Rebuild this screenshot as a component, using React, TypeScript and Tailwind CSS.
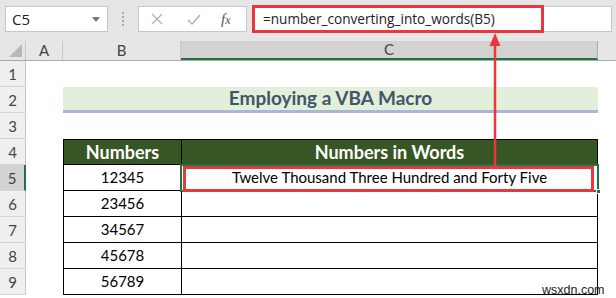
import React from "react";

const rowH = "h-[26px]";

function RowHead({ n, active }: { n: number; active?: boolean }) {
  return (
    <div
      className={`w-[26px] ${rowH} shrink-0 flex items-end justify-center pb-[1px] text-[15px] text-[#444] border-b border-[#d4d4d4] ${
        active ? "bg-[#d2d2d2] border-r-2 border-r-[#217346]" : "bg-[#efefef] border-r border-r-[#c8c8c8]"
      }`}
    >
      {n}
    </div>
  );
}

function EmptyRow({ n }: { n: number }) {
  return (
    <div className="flex">
      <RowHead n={n} />
      <div className="flex-1 bg-white" />
    </div>
  );
}

function DataRow({ n, num, words, active }: { n: number; num: string; words?: string; active?: boolean }) {
  return (
    <div className="flex">
      <RowHead n={n} active={active} />
      <div className="w-[37px] shrink-0" />
      <div className={`w-[118px] shrink-0 ${rowH} border-l border-b border-black flex items-center justify-center text-[15px] text-black`}>
        {num}
      </div>
      <div className={`w-[417px] shrink-0 ${rowH} border-l border-r border-b border-black flex items-center justify-center text-[15px] text-black`}>
        {words}
      </div>
    </div>
  );
}

export default function App() {
  return (
    <div
      className="relative w-[616px] h-[298px] overflow-hidden bg-white"
      style={{ fontFamily: "Lato, 'Open Sans', sans-serif" }}
    >
      {/* toolbar */}
      <div className="h-[41px] bg-[#e6e6e6] flex items-start pt-[6px] pl-[5px]" style={{ fontFamily: "'Open Sans', sans-serif" }}>
        <div className="w-[103px] h-[26px] bg-white border border-[#c6c6c6] flex items-center justify-between pl-[6px] pr-[7px] text-[15px] text-[#222]">
          <span>C5</span>
          <svg width="8" height="5" viewBox="0 0 8 5"><path d="M0 0h8L4 5z" fill="#777" /></svg>
        </div>
        <div className="w-[30px] h-[26px] flex flex-col items-center justify-center gap-[2px]">
          <span className="w-[2px] h-[2px] bg-[#a8a8a8]" />
          <span className="w-[2px] h-[2px] bg-[#a8a8a8]" />
          <span className="w-[2px] h-[2px] bg-[#a8a8a8]" />
          <span className="w-[2px] h-[2px] bg-[#a8a8a8]" />
        </div>
        <div className="w-[109px] h-[26px] bg-white border border-[#c6c6c6] flex items-center pl-[12px]">
          <svg width="12" height="12" viewBox="0 0 12 12"><path d="M1 1l10 10M11 1L1 11" stroke="#b0b0b0" strokeWidth="1.3" /></svg>
          <svg className="ml-[24px]" width="14" height="11" viewBox="0 0 14 11"><path d="M1 6l4 4 8-9" stroke="#b0b0b0" strokeWidth="1.4" fill="none" /></svg>
          <span className="ml-[20px] text-[15px] italic text-[#555]" style={{ fontFamily: "'Liberation Serif', serif" }}>
            f<span className="text-[12px]">x</span>
          </span>
        </div>
        <div className="ml-[5px] w-[360px] h-[26px] bg-white border border-[#c6c6c6] flex items-center pl-[10px] text-[13.6px] text-[#222]">
          =number_converting_into_words(B5)
        </div>
      </div>

      {/* column headers */}
      <div className="flex h-[20px] bg-[#e6e6e6] border-b border-[#ababab] text-[15px] text-[#444]">
        <div className="w-[26px] shrink-0 border-r border-[#c8c8c8] relative">
          <svg className="absolute right-[3px] bottom-[3px]" width="13" height="13" viewBox="0 0 13 13"><path d="M13 0v13H0z" fill="#b8b8b8" /></svg>
        </div>
        <div className="w-[37px] shrink-0 border-r border-[#c8c8c8] flex items-center justify-center">A</div>
        <div className="w-[118px] shrink-0 border-r border-[#c8c8c8] flex items-center justify-center">B</div>
        <div className="w-[417px] shrink-0 bg-[#d2d2d2] border-r border-[#ababab] border-b-2 border-b-[#217346] flex items-center justify-center">C</div>
        <div className="flex-1" />
      </div>

      {/* rows */}
      <EmptyRow n={1} />
      <div className="flex">
        <RowHead n={2} />
        <div className="w-[37px] shrink-0" />
        <div className={`w-[535px] shrink-0 ${rowH} bg-[#e2efda] border-b-[3px] border-[#a9b6d6] flex items-center justify-center text-[19px] font-bold text-[#44546a]`}>
          Employing a VBA Macro
        </div>
      </div>
      <EmptyRow n={3} />
      <div className="flex">
        <RowHead n={4} />
        <div className="w-[37px] shrink-0" />
        <div className={`w-[118px] shrink-0 ${rowH} bg-[#375623] border-l border-t border-b border-black flex items-center justify-center text-[18px] font-bold text-white`}>
          Numbers
        </div>
        <div className={`w-[417px] shrink-0 ${rowH} bg-[#375623] border border-black flex items-center justify-center text-[18px] font-bold text-white`}>
          Numbers in Words
        </div>
      </div>
      <DataRow n={5} num="12345" words="Twelve Thousand Three Hundred and Forty Five" active />
      <DataRow n={6} num="23456" />
      <DataRow n={7} num="34567" />
      <DataRow n={8} num="45678" />
      <DataRow n={9} num="56789" />

      {/* selection + red boxes */}
      <div className="absolute left-[180px] top-[164px] w-[419px] h-[28px] border-2 border-[#217346]" />
      <div className="absolute left-[596px] top-[189px] w-[5px] h-[5px] bg-[#217346] border border-white" />
      <div className="absolute left-[183px] top-[166px] w-[411px] h-[26px] border-[3px] border-[#e8373d]" />
      <div className="absolute left-[252px] top-[5px] w-[292px] h-[28px] border-[3px] border-[#e8373d]" />

      {/* arrow */}
      <svg className="absolute left-[485px] top-[32px]" width="20" height="136" viewBox="0 0 20 136">
        <path d="M10 12V134" stroke="#e8373d" strokeWidth="2.5" />
        <path d="M10 1L4.5 14h11z" fill="#e8373d" />
      </svg>

      <div className="absolute left-[542px] top-[281px] text-[12.5px] text-[#222]" style={{ fontFamily: "'Liberation Sans', sans-serif" }}>
        wsxdn.com
      </div>
    </div>
  );
}
